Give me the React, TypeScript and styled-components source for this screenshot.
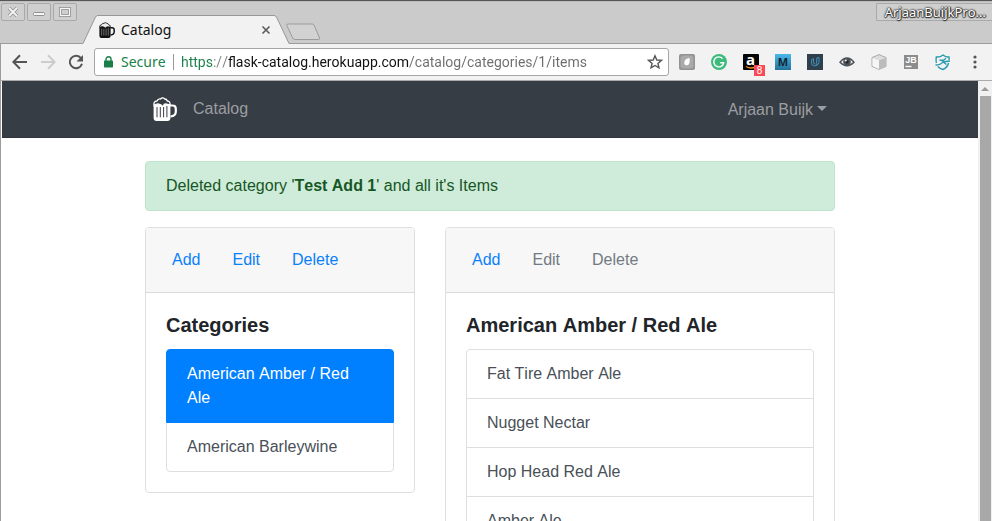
import React from "react";
import styled, { createGlobalStyle, css } from "styled-components";

const GlobalStyle = createGlobalStyle`
  *, *::before, *::after { box-sizing: border-box; }
  html, body { margin: 0; height: 100%; overflow: hidden; }
  #root { height: 100%; }
  body { background: #fff; color: #212529; font: 16px/24px "Liberation Sans", Arial, sans-serif; font-kerning: none; }
  button, input { font: inherit; }
  a { text-decoration: none; }
  svg { display: block; flex: none; overflow: visible; }
`;

const chromeFont = css`
  font-family: "Noto Sans", "Open Sans", sans-serif;
  font-size: 14px;
  line-height: 20px;
`;

const Window = styled.div`
  display: flex;
  flex-direction: column;
  height: 100vh;
  overflow: hidden;
  border-top: 1px solid #57545a;
`;

const TitleBar = styled.header`
  display: flex;
  align-items: flex-start;
  height: 43px;
  padding-left: 1px;
  background: #cbcbcb;
  border-top: 1px solid #bdbdbd;
  box-shadow: inset 0 -1px #9c9c9c;
  ${chromeFont}
`;

const WindowButtons = styled.div`
  display: flex;
  gap: 2px;
  padding-top: 1px;
`;

const WindowButton = styled.button`
  display: grid;
  place-items: center;
  width: 24px;
  height: 18px;
  padding: 0;
  background: #cfcfcf;
  border: 1px solid #a9a9a9;
  border-radius: 2px;
`;

const TabStrip = styled.nav`
  display: flex;
  align-items: flex-end;
  align-self: stretch;
  flex: 1;
  margin-left: 6px;
`;

const Tab = styled.div`
  position: relative;
  display: flex;
  align-items: center;
  gap: 6px;
  width: 206px;
  height: 29px;
  padding: 0 18px 0 16px;
  color: #111;
`;

const TabShape = styled.svg`
  position: absolute;
  inset: 0;
`;

const TabTitle = styled.span`
  position: relative;
  flex: 1;
`;

const TabIcon = styled.span`
  position: relative;
`;

const BareButton = styled.button`
  position: relative;
  display: grid;
  place-items: center;
  padding: 0;
  border: 0;
  background: none;
`;

const NewTab = styled(BareButton)`
  margin: 0 0 3px -4px;
`;

const WindowUser = styled.button`
  flex: none;
  height: 18px;
  margin-top: 1px;
  padding: 0 6px 0 8px;
  border: 1px solid #a9a9a9;
  border-right: 0;
  border-radius: 2px 0 0 2px;
  background: #cfcfcf;
  color: #fff;
  font-size: 13px;
  line-height: 16px;
  text-shadow: 0 0 2px #222, 0 0 2px #222, 0 1px 1px #333, 1px 0 1px #333;
`;

const Toolbar = styled.div`
  display: flex;
  align-items: center;
  height: 37px;
  padding: 0 10px 0 11px;
  background: #f2f2f2;
  border-left: 1px solid #9c9c9c;
  border-bottom: 1px solid #aaa;
  ${chromeFont}
`;

const HistoryButtons = styled.div`
  display: flex;
  gap: 12px;
`;

const AddressBar = styled.div`
  display: flex;
  align-items: center;
  flex: 1;
  height: 28px;
  margin-left: 10px;
  padding: 0 5px 0 9px;
  background: #fff;
  border: 1px solid #a6a6a6;
  border-radius: 3px;
`;

const Secure = styled.span`
  display: flex;
  align-items: center;
  gap: 8px;
  width: 69px;
  color: #1a8048;
`;

const Divider = styled.span`
  width: 1px;
  height: 16px;
  margin-right: 7px;
  background: #999;
`;

const Address = styled.input`
  flex: 1;
  min-width: 0;
  height: 24px;
  padding: 0;
  border: 0;
  outline: 0;
  font-family: Roboto, "Noto Sans", sans-serif;
  font-size: 14px;
  color: transparent;
  background: linear-gradient(90deg, #1a8048 32px, #808080 32px 47px, #111 47px 228px, #6d6d6d 228px);
  background-clip: text;
  -webkit-background-clip: text;
`;

const Extensions = styled.div`
  display: flex;
  gap: 16px;
  margin: 0 17px 0 10px;
`;

const Badge = styled.span`
  position: absolute;
  right: -6px;
  bottom: -6px;
  width: 11px;
  height: 11px;
  background: #fb4955;
  color: #fff;
  font-family: "Liberation Sans", sans-serif;
  font-size: 10px;
  line-height: 11px;
  text-align: center;
`;

const Viewport = styled.div`
  display: flex;
  flex: 1;
  min-height: 0;
  border-left: 1px solid #9c9c9c;
  padding-left: 1px;
`;

const Page = styled.div`
  flex: 1;
  min-width: 0;
  overflow: hidden;
`;

const Scrollbar = styled.div`
  display: flex;
  flex-direction: column;
  align-items: center;
  width: 14px;
  padding-top: 6px;
  gap: 5px;
  background: #f1f1f1;
`;

const Thumb = styled.div`
  width: 11px;
  flex: 1;
  background: #a8a8a8;
`;

const Navbar = styled.nav`
  height: 57px;
  background: #373d44;
  border-bottom: 1px solid #32333c;
`;

const Container = styled.div`
  max-width: 720px;
  margin: 0 auto;
  padding: 0 15px;
`;

const NavInner = styled(Container)`
  display: flex;
  align-items: center;
  height: 56px;
  padding: 0 23px;
`;

const NavLink = styled.a`
  margin-left: 16px;
  color: #9b9ea2;
`;

const UserMenu = styled.button`
  display: flex;
  align-items: center;
  gap: 4px;
  margin-left: auto;
  padding: 2px 0 0;
  border: 0;
  background: none;
  color: #9b9ea2;
`;

const Caret = styled.span`
  margin-bottom: 4px;
  border: 5px solid transparent;
  border-top-color: currentColor;
  border-bottom: 0;
`;

const Alert = styled.div`
  margin: 23px 0 16px;
  padding: 12px 20px;
  color: #155724;
  background: #cfebda;
  border: 1px solid #bce5ca;
  border-radius: 4px;
`;

const Columns = styled.div`
  display: grid;
  grid-template-columns: 270fr 390fr;
  align-items: start;
  gap: 30px;
`;

const Card = styled.section`
  min-width: 0;
  border: 1px solid #dfdfdf;
  border-radius: 4px;
`;

const CardHeader = styled.div`
  display: flex;
  padding: 12px 10px;
  background: #f7f7f7;
  border-bottom: 1px solid #dadada;
  border-radius: 3px 3px 0 0;
`;

const Pill = styled.a<{ $disabled?: boolean }>`
  padding: 8px 16px;
  color: ${(p) => (p.$disabled ? "#727b83" : "#0b7ffb")};
`;

const CardBody = styled.div`
  padding: 20px;
`;

const CardTitle = styled.h4`
  margin: 0 0 12px;
  font-size: 20px;
  line-height: 24px;
`;

const List = styled.div`
  display: flex;
  flex-direction: column;
`;

const ListItem = styled.a<{ $active?: boolean }>`
  padding: 12px 20px;
  color: ${(p) => (p.$active ? "#fff" : "#495057")};
  background: ${(p) => (p.$active ? "#0080ff" : "#fff")};
  border: 1px solid ${(p) => (p.$active ? "#0080ff" : "#dfdfdf")};
  position: relative;
  z-index: ${(p) => (p.$active ? 1 : 0)};
  & + & { margin-top: -1px; }
  &:first-child { border-radius: 4px 4px 0 0; }
  &:last-child { border-radius: 0 0 4px 4px; }
`;

function Mug({ size, color, gap, foam }: { size: number; color: string; gap: string; foam: string }) {
  return (
    <svg width={size} height={size} viewBox="0 0 24 24">
      <path d="M17 8.500h2.500q3.300 0 3.300 3.300v3q0 4.200-5.300 4.700" fill="none" stroke={color} strokeWidth="2.200" />
      <path d="M.6 7H17.400v14q0 3-3 3H3.600q-3 0-3-3z" fill={color} />
      <path d="M4 10v10.300M7.300 10v10.300M10.600 10v10.300M13.900 9v11.300" stroke={gap} strokeWidth="1" />
      <path
        d="M1.200 8.500Q0 4.500 4 4Q5 1.500 7.500 2Q9.500-.2 11.800 2Q13.800 2 14.300 4Q17.800 4.500 16.800 8L12.500 7Q11 7 10.300 9Q9 9.800 8.200 8L5 6.900Q3 6.900 1.200 8.500z"
        fill={foam}
        stroke={color}
        strokeWidth="1.300"
      />
    </svg>
  );
}

const extensions = [
  {
    name: "Leaf",
    icon: (
      <svg width="16" height="16" viewBox="0 0 16 16">
        <rect width="16" height="16" rx="2" fill="#939393" />
        <rect x="1.500" y="1.500" width="13" height="13" rx="3" fill="#aaa" />
        <path d="M10.500 4Q11.500 11 8 11.200Q5 11.500 5.300 8Q6 4.500 10.500 4" fill="#fff" />
      </svg>
    ),
  },
  {
    name: "Grammar check",
    icon: (
      <svg width="16" height="16" viewBox="0 0 16 16">
        <circle cx="8" cy="8" r="8" fill="#3dba7c" />
        <path d="M11.600 4.600A5 5 0 1 0 12.700 8.800H9.200M12.700 8.800l-1.400 3.200" fill="none" stroke="#fff" strokeWidth="1.400" />
      </svg>
    ),
  },
  {
    name: "Shopping",
    badge: "8",
    icon: (
      <svg width="16" height="16" viewBox="0 0 16 16">
        <rect width="16" height="16" rx="1" fill="#050505" />
        <text x="7.600" y="11" textAnchor="middle" fontFamily="Open Sans" fontWeight="700" fontSize="15" fill="#fff">a</text>
        <path d="M3 12.500q5 3 9 .3" fill="none" stroke="#e98c28" strokeWidth="1.400" />
      </svg>
    ),
  },
  {
    name: "Markdown",
    icon: (
      <svg width="16" height="16" viewBox="0 0 16 16">
        <defs>
          <linearGradient id="blue" x2="0" y2="1">
            <stop stopColor="#49b9e9" />
            <stop offset="1" stopColor="#24729a" />
          </linearGradient>
        </defs>
        <rect width="16" height="16" fill="url(#blue)" />
        <text x="8" y="12" textAnchor="middle" fontFamily="Noto Sans" fontWeight="700" fontSize="11" fill="#122634">M</text>
      </svg>
    ),
  },
  {
    name: "Courses",
    icon: (
      <svg width="16" height="16" viewBox="0 0 16 16">
        <rect width="16" height="16" fill="#313f4c" />
        <path d="M6.500 4.500L4.600 5.600v3.700q.2 2.500 2.800 2.500 2.300-.1 2.300-2.500V4L12 3.400v5q0 2.600-3.400 3.300M6.500 4.500v3.700q0 1.800 1.700 1.600" fill="none" stroke="#3a93bd" strokeWidth="1" />
      </svg>
    ),
  },
  {
    name: "Preview",
    icon: (
      <svg width="16" height="16" viewBox="0 0 16 16">
        <path d="M1 8.200Q8-.2 15 8.200Q8 15.200 1 8.200z" fill="#f2f2f2" stroke="#4b5258" strokeWidth="1.400" />
        <circle cx="8" cy="7.800" r="3.800" fill="#4b5258" />
        <circle cx="8" cy="7.800" r="1.700" fill="#202428" />
        <circle cx="6.800" cy="6.500" r="1.100" fill="#eee" />
      </svg>
    ),
  },
  {
    name: "Box",
    icon: (
      <svg width="16" height="16" viewBox="0 0 16 16">
        <path d="M8 .6l7 3v8.800l-7 3-7-3V3.600z" fill="#ddd" stroke="#aaa" />
        <path d="M1.500 4L8 6.500V15l-6.500-3z" fill="#f6f6f6" />
        <path d="M8 6.500L14.500 4v8L8 15z" fill="#bcbcbc" />
      </svg>
    ),
  },
  {
    name: "JB",
    icon: (
      <svg width="16" height="16" viewBox="0 0 16 16">
        <rect x="1" y="1" width="14" height="14" fill="#8c8c8c" />
        <text x="8" y="9" textAnchor="middle" fontFamily="Liberation Sans" fontWeight="700" fontSize="9" fill="#fff">JB</text>
        <path d="M2.500 12.500h6" stroke="#fff" strokeWidth="1.400" />
      </svg>
    ),
  },
  {
    name: "Shield",
    icon: (
      <svg width="16" height="16" viewBox="0 0 16 16">
        <path d="M1.300 9Q.8 5 1.300 3Q5 3.400 8 1Q11 3.300 14 3q.2 1.500 0 3M2.800 12.500Q5 14.800 8 15.500Q12.500 13.500 13.500 9" fill="none" stroke="#2a9bb0" strokeWidth="1.400" />
        <path d="M.5 11q5.500 0 7-3L15 7M4.500 6.300h4L11 4.300M8 8l3.500 2.500" fill="none" stroke="#2a9bb0" strokeWidth="1.400" />
      </svg>
    ),
  },
];

const beers = ["Fat Tire Amber Ale", "Nugget Nectar", "Hop Head Red Ale", "Amber Ale"];

export default function App() {
  return (
    <Window>
      <GlobalStyle />
      <TitleBar>
        <WindowButtons>
          <WindowButton aria-label="Close window">
            <svg width="12" height="12" viewBox="0 0 12 12" fill="none">
              <path d="M2 2l8 8m0-8l-8 8" stroke="#909090" strokeWidth="3.500" />
              <path d="M2 2l8 8m0-8l-8 8" stroke="#f5f5f5" strokeWidth="1.800" />
            </svg>
          </WindowButton>
          <WindowButton aria-label="Minimize window">
            <svg width="12" height="12" viewBox="0 0 12 12">
              <rect x=".5" y="6.500" width="11" height="3" rx="1" fill="#f5f5f5" stroke="#909090" />
            </svg>
          </WindowButton>
          <WindowButton aria-label="Maximize window">
            <svg width="12" height="12" viewBox="0 0 12 12" fill="none">
              <rect x="1.500" y="2.500" width="9" height="7" stroke="#909090" strokeWidth="3" />
              <rect x="1.500" y="2.500" width="9" height="7" stroke="#f5f5f5" strokeWidth="1.300" />
            </svg>
          </WindowButton>
        </WindowButtons>
        <TabStrip aria-label="Tabs">
          <Tab>
            <TabShape width="206" height="29" viewBox="0 0 206 29">
              <path d="M0 28.500L12.500 2Q13.500.5 15 .5H191Q192.500.5 193.500 2L206 28.500V29H0z" fill="#f2f2f2" />
              <path d="M0 28.500L12.500 2Q13.500.5 15 .5H191Q192.500.5 193.500 2L206 28.500" fill="none" stroke="#979797" />
            </TabShape>
            <TabIcon><Mug size={16} color="#111" gap="#999" foam="#eee" /></TabIcon>
            <TabTitle>Catalog</TabTitle>
            <BareButton aria-label="Close tab">
              <svg width="10" height="10" viewBox="0 0 10 10">
                <path d="M1.500 1.500l7 7m0-7l-7 7" stroke="#5a5a5a" strokeWidth="1.600" />
              </svg>
            </BareButton>
          </Tab>
          <NewTab aria-label="New tab">
            <svg width="36" height="18" viewBox="0 0 36 18">
              <path d="M3 1H27Q28.500 1 29 2L34.500 15Q35 16.500 33.500 16.500H10Q8.500 16.500 7.700 15L1.800 2.500Q1.500 1 3 1z" fill="#d2d2d2" stroke="#9b9b9b" />
            </svg>
          </NewTab>
        </TabStrip>
        <WindowUser>ArjaanBuijkPro...</WindowUser>
      </TitleBar>

      <Toolbar>
        <HistoryButtons>
          <BareButton aria-label="Back">
            <svg width="16" height="16" viewBox="0 0 16 16" fill="none" stroke="#555" strokeWidth="2">
              <path d="M15 8H2M8 1.300L1.400 8L8 14.700" />
            </svg>
          </BareButton>
          <BareButton aria-label="Forward" disabled>
            <svg width="16" height="16" viewBox="0 0 16 16" fill="none" stroke="#ccc" strokeWidth="2">
              <path d="M1 8h13M8 1.300L14.600 8L8 14.700" />
            </svg>
          </BareButton>
          <BareButton aria-label="Reload">
            <svg width="16" height="16" viewBox="0 0 16 16">
              <path d="M13 4.200A6.200 6.200 0 1 0 14 9.800" fill="none" stroke="#555" strokeWidth="2" />
              <path d="M15 1v6.500H8.500z" fill="#555" />
            </svg>
          </BareButton>
        </HistoryButtons>
        <AddressBar>
          <Secure>
            <svg width="9" height="12" viewBox="0 0 9 12">
              <path d="M2 5V3.200a2.500 2.500 0 0 1 5 0V5" fill="none" stroke="#1a8048" strokeWidth="1.400" />
              <rect y="4.500" width="9" height="7" rx=".7" fill="#1a8048" />
            </svg>
            Secure
          </Secure>
          <Divider />
          <Address aria-label="Address" defaultValue="https://flask-catalog.herokuapp.com/catalog/categories/1/items" />
          <BareButton aria-label="Bookmark">
            <svg width="16" height="16" viewBox="0 0 16 16">
              <path d="M8 1.800l1.800 4.200 4.700.4-3.600 3 1.100 4.500L8 11.500l-4 2.400 1.100-4.500-3.600-3L6.200 6z" fill="none" stroke="#555" strokeWidth="1.400" />
            </svg>
          </BareButton>
        </AddressBar>
        <Extensions>
          {extensions.map((e) => (
            <BareButton key={e.name} aria-label={e.name}>
              {e.icon}
              {e.badge && <Badge>{e.badge}</Badge>}
            </BareButton>
          ))}
        </Extensions>
        <BareButton aria-label="Browser menu">
          <svg width="14" height="16" viewBox="0 0 14 16" fill="#555">
            <circle cx="7" cy="3" r="1.600" />
            <circle cx="7" cy="8" r="1.600" />
            <circle cx="7" cy="13" r="1.600" />
          </svg>
        </BareButton>
      </Toolbar>

      <Viewport>
        <Page>
          <Navbar>
            <NavInner>
              <Mug size={24} color="#fff" gap="#373d44" foam="#373d44" />
              <NavLink href="#">Catalog</NavLink>
              <UserMenu>Arjaan Buijk<Caret /></UserMenu>
            </NavInner>
          </Navbar>
          <Container as="main">
            <Alert role="alert">
              Deleted category '<strong>Test Add 1</strong>' and all it's Items
            </Alert>
            <Columns>
              <Card>
                <CardHeader>
                  <Pill href="#">Add</Pill>
                  <Pill href="#">Edit</Pill>
                  <Pill href="#">Delete</Pill>
                </CardHeader>
                <CardBody>
                  <CardTitle>Categories</CardTitle>
                  <List>
                    <ListItem href="#" $active>American Amber / Red Ale</ListItem>
                    <ListItem href="#">American Barleywine</ListItem>
                  </List>
                </CardBody>
              </Card>
              <Card>
                <CardHeader>
                  <Pill href="#">Add</Pill>
                  <Pill href="#" $disabled aria-disabled>Edit</Pill>
                  <Pill href="#" $disabled aria-disabled>Delete</Pill>
                </CardHeader>
                <CardBody>
                  <CardTitle>American Amber / Red Ale</CardTitle>
                  <List>
                    {beers.map((b) => <ListItem href="#" key={b}>{b}</ListItem>)}
                  </List>
                </CardBody>
              </Card>
            </Columns>
          </Container>
        </Page>
        <Scrollbar>
          <svg width="8" height="4" viewBox="0 0 8 4"><path d="M0 4l4-4 4 4z" fill="#999" /></svg>
          <Thumb />
        </Scrollbar>
      </Viewport>
    </Window>
  );
}
